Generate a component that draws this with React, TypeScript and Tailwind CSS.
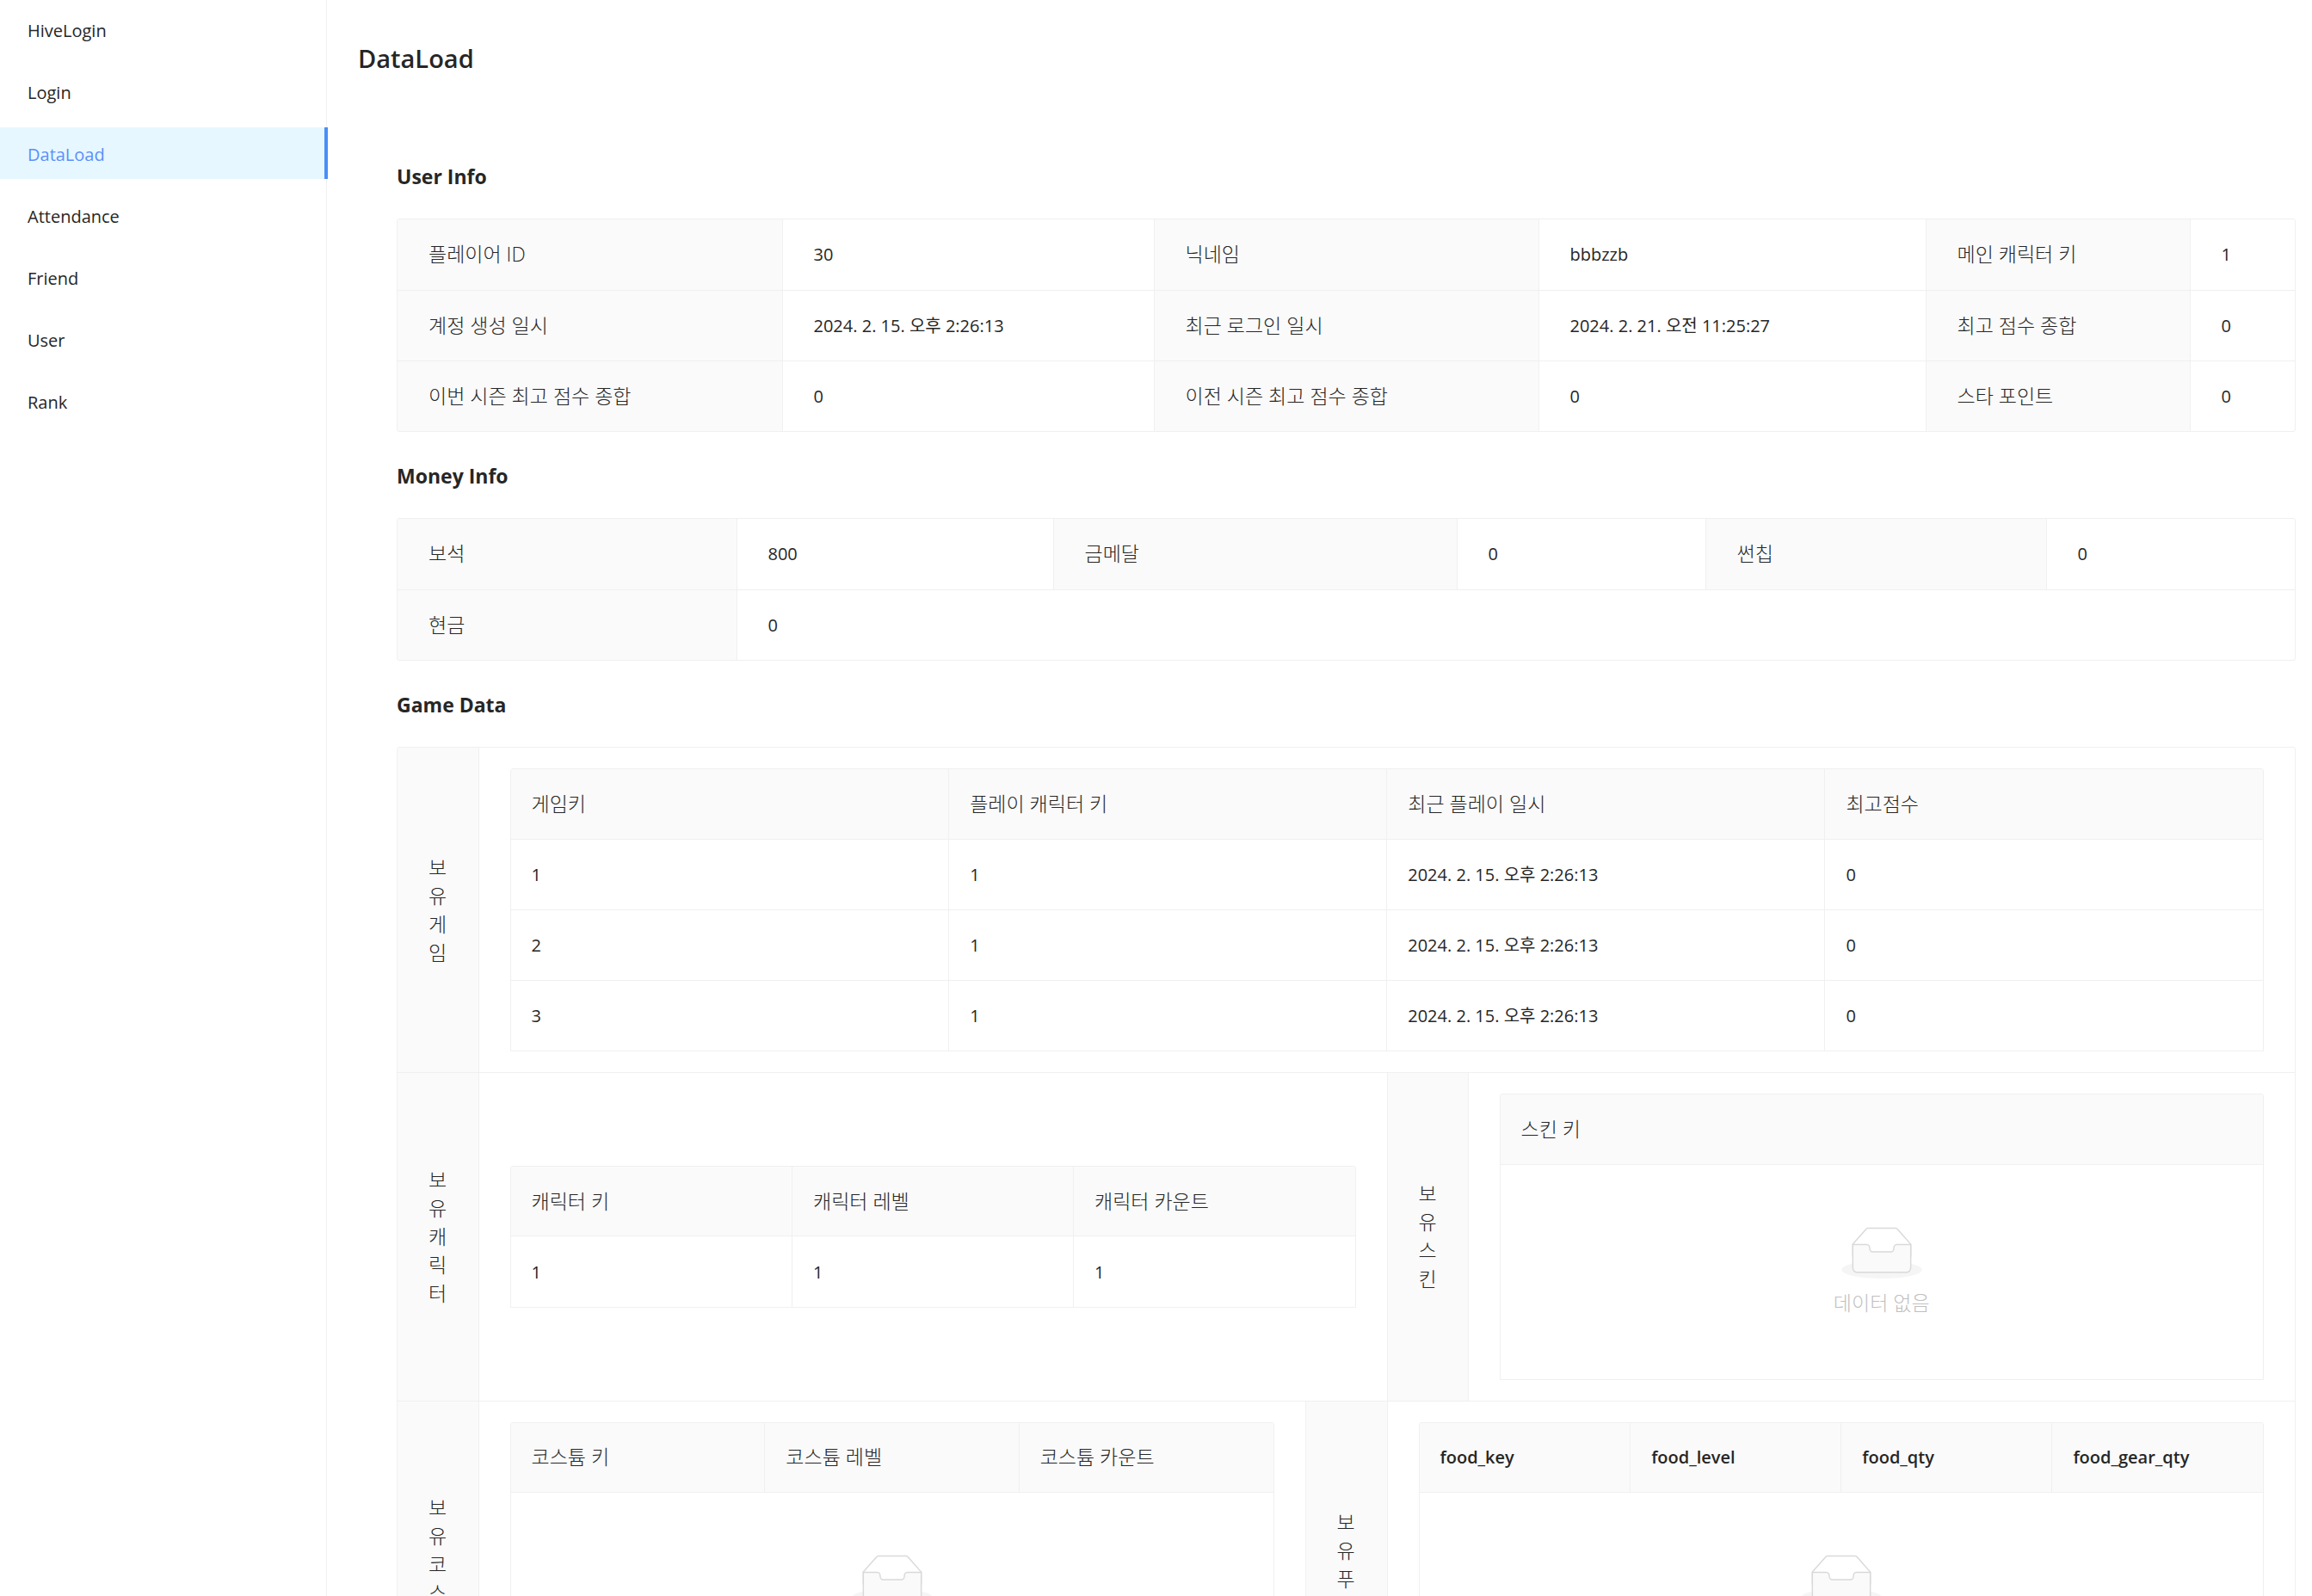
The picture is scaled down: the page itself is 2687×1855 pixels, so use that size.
import type { ReactNode } from "react";

const menu = ["HiveLogin", "Login", "DataLoad", "Attendance", "Friend", "User", "Rank"];
const activeItem = "DataLoad";

const hangul = /[가-힣]/;
const labelSize = (text: string) => (hangul.test(text) ? "text-[23px] font-light" : "text-[20px] font-semibold");

function Sidebar() {
  return (
    <nav className="w-[380px] shrink-0 border-r border-[#f0f0f0] pt-1">
      <ul className="flex flex-col gap-3">
        {menu.map((item) => (
          <li key={item}>
            <a
              href={`#${item}`}
              className={
                item === activeItem
                  ? "relative -mr-0.5 flex h-[60px] items-center border-r-4 border-[#4a8ff7] bg-[#e6f7ff] pt-0.5 pl-8 text-[#5b8ff9]"
                  : "flex h-[60px] items-center pt-0.5 pl-8"
              }
            >
              {item}
            </a>
          </li>
        ))}
      </ul>
    </nav>
  );
}

function Section({ title, children }: { title: string; children: ReactNode }) {
  return (
    <section className="mb-[30px]">
      <h2 className="mb-7 text-[23px] leading-[42px] font-bold">{title}</h2>
      {children}
    </section>
  );
}

function Frame({ columns, children }: { columns: number[]; children: ReactNode }) {
  return (
    <div className="overflow-hidden rounded-[3px] border border-[#f0f0f0]">
      <table className="w-full table-fixed border-collapse">
        <colgroup>
          {columns.map((width, i) => (
            <col key={i} style={{ width }} />
          ))}
        </colgroup>
        <tbody className="divide-y divide-[#f0f0f0]">{children}</tbody>
      </table>
    </div>
  );
}

type Item = { label: string; value: string; span?: number };

function Descriptions({ columns, rows }: { columns: number[]; rows: Item[][] }) {
  return (
    <Frame columns={columns}>
      {rows.map((row, i) => (
        <tr key={i} className="divide-x divide-[#f0f0f0]">
          {row.map(({ label, value, span }) => [
            <th key={label} scope="row" className="h-[82px] bg-[#fafafa] px-9 text-left text-[23px] font-light">
              {label}
            </th>,
            <td key={label + "-value"} colSpan={span} className="px-9">
              {value}
            </td>,
          ])}
        </tr>
      ))}
    </Frame>
  );
}

function EmptyBox() {
  return (
    <div className="my-12 flex flex-col items-center gap-3">
      <svg className="h-[60px] w-[94px]" viewBox="0 0 64 41" aria-hidden="true">
        <g transform="translate(0 1)" fill="none" fillRule="evenodd">
          <ellipse fill="#F5F5F5" cx="32" cy="33" rx="32" ry="7" />
          <g fillRule="nonzero" stroke="#D9D9D9">
            <path d="M55 12.76L44.854 1.258C44.367.474 43.656 0 42.907 0H21.093c-.749 0-1.46.474-1.947 1.257L9 12.761V22h46v-9.24z" />
            <path
              d="M41.613 15.931c0-1.605.994-2.93 2.227-2.931H55v18.137C55 33.26 53.68 35 52.05 35h-40.1C10.32 35 9 33.259 9 31.137V13h11.16c1.233 0 2.227 1.323 2.227 2.928v.022c0 1.605 1.005 2.901 2.237 2.901h14.752c1.232 0 2.237-1.308 2.237-2.913v-.007z"
              fill="#FAFAFA"
            />
          </g>
        </g>
      </svg>
      <p className="text-[23px] leading-[33px] font-light text-[#bfbfbf]">데이터 없음</p>
    </div>
  );
}

function DataTable({ headers, rows = [] }: { headers: string[]; rows?: string[][] }) {
  return (
    <div className="overflow-hidden rounded-t-[3px] border border-[#f0f0f0]">
      <table className="w-full table-fixed border-collapse">
        <thead>
          <tr className="divide-x divide-[#f0f0f0]">
            {headers.map((header) => (
              <th key={header} scope="col" className={`h-[81px] bg-[#fafafa] px-6 text-left ${labelSize(header)}`}>
                {header}
              </th>
            ))}
          </tr>
        </thead>
        <tbody>
          {rows.map((row, i) => (
            <tr key={i} className="divide-x divide-[#f0f0f0] border-t border-[#f0f0f0]">
              {row.map((cell, j) => (
                <td key={j} className="h-[82px] px-6">
                  {cell}
                </td>
              ))}
            </tr>
          ))}
          {rows.length === 0 && (
            <tr className="border-t border-[#f0f0f0]">
              <td colSpan={headers.length} className="px-6 py-6">
                <EmptyBox />
              </td>
            </tr>
          )}
        </tbody>
      </table>
    </div>
  );
}

function SideLabel({ children }: { children: ReactNode }) {
  return (
    <th scope="row" className="bg-[#fafafa] px-9 text-left text-[23px] leading-[33px] font-light break-all">
      {children}
    </th>
  );
}

function Slot({ span, children }: { span?: number; children: ReactNode }) {
  return (
    <td colSpan={span} className="px-9 py-6">
      {children}
    </td>
  );
}

const gameRow = "divide-x divide-[#f0f0f0]";
const playedAt = "2024. 2. 15. 오후 2:26:13";

export default function App() {
  return (
    <div className="flex h-screen bg-white font-['Open_Sans','Noto_Sans_CJK_KR',sans-serif] text-[20px] leading-[33px] text-[#262626]">
      <Sidebar />
      <main className="min-w-0 flex-1 overflow-y-auto pr-[19px] pl-9 [scrollbar-width:none]">
        <h1 className="pt-11 text-[29px] leading-[48px] font-semibold">DataLoad</h1>
        <div className="pt-[92px] pl-[45px]">
          <Section title="User Info">
            <Descriptions
              columns={[447, 432, 447, 450, 307, 122]}
              rows={[
                [
                  { label: "플레이어 ID", value: "30" },
                  { label: "닉네임", value: "bbbzzb" },
                  { label: "메인 캐릭터 키", value: "1" },
                ],
                [
                  { label: "계정 생성 일시", value: playedAt },
                  { label: "최근 로그인 일시", value: "2024. 2. 21. 오전 11:25:27" },
                  { label: "최고 점수 종합", value: "0" },
                ],
                [
                  { label: "이번 시즌 최고 점수 종합", value: "0" },
                  { label: "이전 시즌 최고 점수 종합", value: "0" },
                  { label: "스타 포인트", value: "0" },
                ],
              ]}
            />
          </Section>
          <Section title="Money Info">
            <Descriptions
              columns={[394, 368, 469, 289, 396, 289]}
              rows={[
                [
                  { label: "보석", value: "800" },
                  { label: "금메달", value: "0" },
                  { label: "썬칩", value: "0" },
                ],
                [{ label: "현금", value: "0", span: 5 }],
              ]}
            />
          </Section>
          <Section title="Game Data">
            <Frame columns={[94, 961, 95, 94, 961]}>
              <tr className={gameRow}>
                <SideLabel>보유게임</SideLabel>
                <Slot span={4}>
                  <DataTable
                    headers={["게임키", "플레이 캐릭터 키", "최근 플레이 일시", "최고점수"]}
                    rows={[
                      ["1", "1", playedAt, "0"],
                      ["2", "1", playedAt, "0"],
                      ["3", "1", playedAt, "0"],
                    ]}
                  />
                </Slot>
              </tr>
              <tr className={gameRow}>
                <SideLabel>보유캐릭터</SideLabel>
                <Slot span={2}>
                  <DataTable headers={["캐릭터 키", "캐릭터 레벨", "캐릭터 카운트"]} rows={[["1", "1", "1"]]} />
                </Slot>
                <SideLabel>보유스킨</SideLabel>
                <Slot>
                  <DataTable headers={["스킨 키"]} />
                </Slot>
              </tr>
              <tr className={gameRow}>
                <SideLabel>보유코스튬</SideLabel>
                <Slot>
                  <DataTable headers={["코스튬 키", "코스튬 레벨", "코스튬 카운트"]} />
                </Slot>
                <SideLabel>보유푸드</SideLabel>
                <Slot span={2}>
                  <DataTable headers={["food_key", "food_level", "food_qty", "food_gear_qty"]} />
                </Slot>
              </tr>
            </Frame>
          </Section>
        </div>
      </main>
    </div>
  );
}
